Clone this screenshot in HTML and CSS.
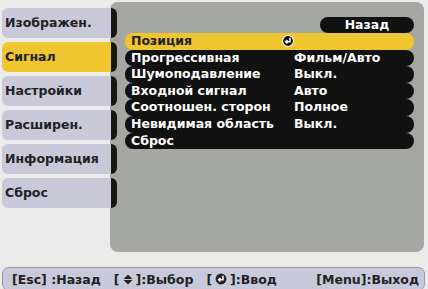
FILE: index.html
```html
<html>
<head>
<link rel="stylesheet" href="styles.css">
</head>
<body>
<div id="screen">
    <div class="main">
        <div class="tabs">
            <div class="tab">Изображен.</div>
            <div class="tab active">Сигнал</div>
            <div class="tab">Настройки</div>
            <div class="tab">Расширен.</div>
            <div class="tab">Информация</div>
            <div class="tab">Сброс</div>
        </div>
        <div class="panel">
            <div class="back-row"><div class="back">Назад</div></div>
            <div class="list">
                <div class="row selected"><span>Позиция</span><span class="enter-cell">
                    <svg class="enter" width="12" height="12" viewBox="0 0 11 11"><circle cx="5.5" cy="5.5" r="5" fill="#111" stroke="#fff" stroke-width="1"/><path d="M7.3 2.6 V6.2 H3.6 M5 4.6 L3.4 6.2 L5 7.8" fill="none" stroke="#fff" stroke-width="1.4"/></svg>
                </span></div>
                <div class="row"><span>Прогрессивная</span><span>Фильм/Авто</span></div>
                <div class="row"><span>Шумоподавление</span><span>Выкл.</span></div>
                <div class="row"><span>Входной сигнал</span><span>Авто</span></div>
                <div class="row"><span>Соотношен. сторон</span><span>Полное</span></div>
                <div class="row"><span>Невидимая область</span><span>Выкл.</span></div>
                <div class="row"><span>Сброс</span><span></span></div>
            </div>
        </div>
    </div>
    <div class="footer">
        <span class="hint">[Esc] :Назад</span>
        <span class="hint">[<svg class="updown" width="10" height="11" viewBox="0 0 10 11"><path d="M5 0.5 L9.5 5 H0.5 Z M0.5 6 H9.5 L5 10.5 Z" fill="#222"/></svg>]:Выбор</span>
        <span class="hint">[<svg class="enter" width="12" height="12" viewBox="0 0 11 11"><circle cx="5.5" cy="5.5" r="5" fill="#222"/><path d="M7.3 2.6 V6.2 H3.6 M5 4.6 L3.4 6.2 L5 7.8" fill="none" stroke="#fff" stroke-width="1.4"/></svg>]:Ввод</span>
        <span class="hint menu">[Menu]:Выход</span>
    </div>
</div>
</body>
</html>
```

FILE: styles.css
```css
body {
    margin: 0;
    background-color: #ebebeb;
    font-family: "DejaVu Sans", sans-serif;
    font-weight: bold;
    color: #fff;
}

#screen {
    width: 428px;
    height: 289px;
    overflow: hidden;
}

.main {
    display: flex;
    padding-top: 2px;
    height: 250px;
}

.tabs {
    display: flex;
    flex-direction: column;
    gap: 4px;
    width: 115px;
    padding: 6px 0 0 2px;
    position: relative;
    z-index: 1;
}

.tab {
    height: 30px;
    line-height: 30px;
    padding-left: 3px;
    font-size: 12.5px;
    color: #222;
    background-color: #c9c9d9;
    border-right: 6px solid #161616;
    border-radius: 6px;
}

.tab.active {
    background-color: #efc530;
}

.panel {
    flex: 1;
    margin-left: -7px;
    margin-right: 4px;
    background-color: #a5a7a3;
    border-radius: 8px;
    padding: 15px 10px 0 15px;
}

.back-row {
    display: flex;
    justify-content: flex-end;
}

.back {
    width: 94px;
    height: 16px;
    line-height: 16px;
    text-align: center;
    font-size: 12.5px;
    background-color: #111;
    border-radius: 8px;
}

.row {
    display: grid;
    grid-template-columns: 163px 1fr;
    height: 16.6px;
    line-height: 16.6px;
    padding-left: 6px;
    font-size: 12.5px;
    background-color: #111;
    border-radius: 8px;
    white-space: nowrap;
}

.row.selected {
    background-color: #efc530;
    color: #222;
}

.enter-cell {
    display: flex;
    align-items: center;
    margin-left: -12px;
}

.footer {
    margin: 15px 3px 0 2px;
    height: 22px;
    display: flex;
    align-items: center;
    gap: 13px;
    padding-left: 9px;
    font-size: 12.5px;
    color: #222;
    background-color: #c9c9dc;
    border: 1px solid #999;
    border-radius: 7px;
    white-space: nowrap;
}

.hint {
    display: flex;
    align-items: center;
}

.hint svg {
    margin: 0 3px;
}

.menu {
    margin-left: auto;
    margin-right: 5px;
}
```
